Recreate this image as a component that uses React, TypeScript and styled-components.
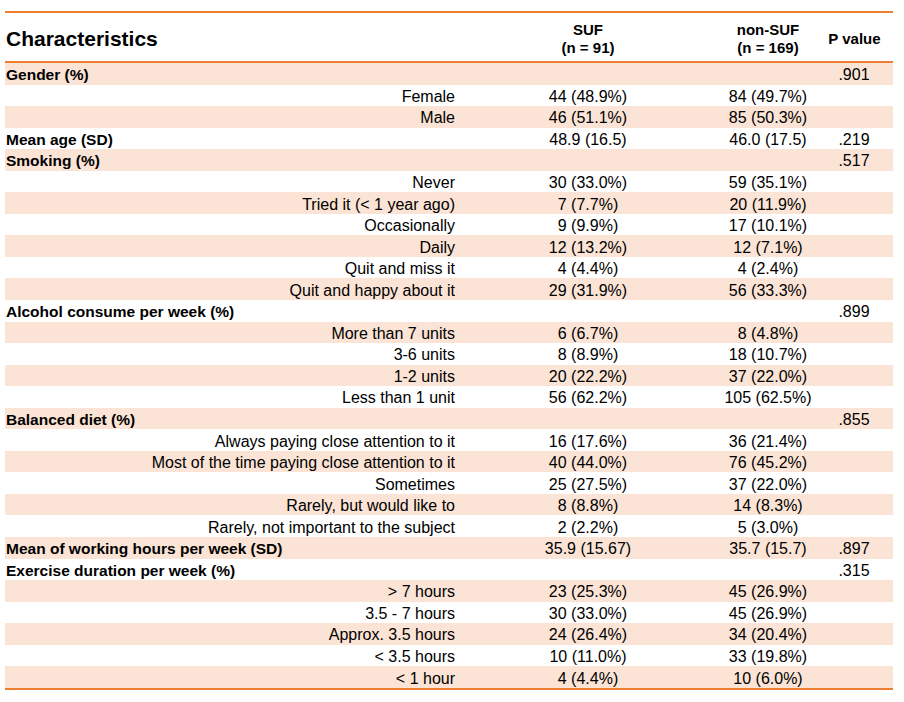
import React from "react";
import styled, { createGlobalStyle } from "styled-components";

const GlobalStyle = createGlobalStyle`
  html, body { margin: 0; padding: 0; background: #ffffff; }
  body { font-family: "Liberation Sans", Arial, sans-serif; color: #000; }
  *, *::before, *::after { box-sizing: border-box; }
`;

const Page = styled.div`
  padding: 11px 0 0 5px;
`;

const Table = styled.div`
  width: 888px;
  border-top: 2px solid #ed7d31;
  border-bottom: 2px solid #ed7d31;
`;

const COLS = "455px 256px 104px 73px";

const HeaderRow = styled.div`
  display: grid;
  grid-template-columns: ${COLS};
  height: 50px;
  padding-top: 3px;
  border-bottom: 2px solid #ed7d31;
  align-items: center;
`;

const Title = styled.div`
  font-size: 21px;
  font-weight: 700;
  padding-left: 1px;
`;

const HeadCell = styled.div<{ $pr?: number }>`
  font-size: 15px;
  font-weight: 700;
  text-align: center;
  line-height: 18px;
  padding-right: ${(p) => p.$pr ?? 0}px;
`;

const Row = styled.div<{ $shaded: boolean }>`
  display: grid;
  grid-template-columns: ${COLS};
  height: 21.55px;
  padding-top: 3px;
  align-items: center;
  background: ${(p) => (p.$shaded ? "#fbe4d5" : "#ffffff")};
  white-space: nowrap;
`;

const Label = styled.div<{ $group: boolean }>`
  font-size: ${(p) => (p.$group ? "15.5px" : "16px")};
  font-weight: ${(p) => (p.$group ? 700 : 400)};
  text-align: ${(p) => (p.$group ? "left" : "right")};
  padding: ${(p) => (p.$group ? "0 0 0 1px" : "0 5px 0 0")};
  line-height: 18px;
`;

const Cell = styled.div<{ $pr?: number }>`
  font-size: 16px;
  line-height: 18px;
  text-align: center;
  padding-right: ${(p) => p.$pr ?? 0}px;
`;

type R = { label: string; group?: boolean; suf?: string; non?: string; p?: string };

const rows: R[] = [
  { label: "Gender (%)", group: true, p: ".901" },
  { label: "Female", suf: "44 (48.9%)", non: "84 (49.7%)" },
  { label: "Male", suf: "46 (51.1%)", non: "85 (50.3%)" },
  { label: "Mean age (SD)", group: true, suf: "48.9 (16.5)", non: "46.0 (17.5)", p: ".219" },
  { label: "Smoking (%)", group: true, p: ".517" },
  { label: "Never", suf: "30 (33.0%)", non: "59 (35.1%)" },
  { label: "Tried it (< 1 year ago)", suf: "7 (7.7%)", non: "20 (11.9%)" },
  { label: "Occasionally", suf: "9 (9.9%)", non: "17 (10.1%)" },
  { label: "Daily", suf: "12 (13.2%)", non: "12 (7.1%)" },
  { label: "Quit and miss it", suf: "4 (4.4%)", non: "4 (2.4%)" },
  { label: "Quit and happy about it", suf: "29 (31.9%)", non: "56 (33.3%)" },
  { label: "Alcohol consume per week (%)", group: true, p: ".899" },
  { label: "More than 7 units", suf: "6 (6.7%)", non: "8 (4.8%)" },
  { label: "3-6 units", suf: "8 (8.9%)", non: "18 (10.7%)" },
  { label: "1-2 units", suf: "20 (22.2%)", non: "37 (22.0%)" },
  { label: "Less than 1 unit", suf: "56 (62.2%)", non: "105 (62.5%)" },
  { label: "Balanced diet (%)", group: true, p: ".855" },
  { label: "Always paying close attention to it", suf: "16 (17.6%)", non: "36 (21.4%)" },
  { label: "Most of the time paying close attention to it", suf: "40 (44.0%)", non: "76 (45.2%)" },
  { label: "Sometimes", suf: "25 (27.5%)", non: "37 (22.0%)" },
  { label: "Rarely, but would like to", suf: "8 (8.8%)", non: "14 (8.3%)" },
  { label: "Rarely, not important to the subject", suf: "2 (2.2%)", non: "5 (3.0%)" },
  { label: "Mean of working hours per week (SD)", group: true, suf: "35.9 (15.67)", non: "35.7 (15.7)", p: ".897" },
  { label: "Exercise duration per week (%)", group: true, p: ".315" },
  { label: "> 7 hours", suf: "23 (25.3%)", non: "45 (26.9%)" },
  { label: "3.5 - 7 hours", suf: "30 (33.0%)", non: "45 (26.9%)" },
  { label: "Approx. 3.5 hours", suf: "24 (26.4%)", non: "34 (20.4%)" },
  { label: "< 3.5 hours", suf: "10 (11.0%)", non: "33 (19.8%)" },
  { label: "< 1 hour", suf: "4 (4.4%)", non: "10 (6.0%)" },
];

export default function App() {
  return (
    <>
      <GlobalStyle />
      <Page>
        <Table>
          <HeaderRow>
            <Title>Characteristics</Title>
            <HeadCell>
              SUF
              <br />
              (n = 91)
            </HeadCell>
            <HeadCell>
              non-SUF
              <br />
              (n = 169)
            </HeadCell>
            <HeadCell $pr={4}>P value</HeadCell>
          </HeaderRow>
          {rows.map((r, i) => (
            <Row key={i} $shaded={i % 2 === 0}>
              <Label $group={!!r.group}>{r.label}</Label>
              <Cell>{r.suf ?? ""}</Cell>
              <Cell>{r.non ?? ""}</Cell>
              <Cell $pr={5}>{r.p ?? ""}</Cell>
            </Row>
          ))}
        </Table>
      </Page>
    </>
  );
}
